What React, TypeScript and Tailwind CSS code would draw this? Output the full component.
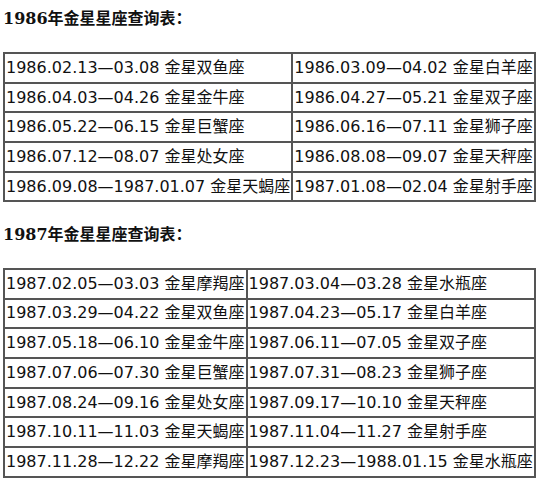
const TABLE_1986: [string, string][] = [
  ['1986.02.13—03.08 金星双鱼座', '1986.03.09—04.02 金星白羊座'],
  ['1986.04.03—04.26 金星金牛座', '1986.04.27—05.21 金星双子座'],
  ['1986.05.22—06.15 金星巨蟹座', '1986.06.16—07.11 金星狮子座'],
  ['1986.07.12—08.07 金星处女座', '1986.08.08—09.07 金星天秤座'],
  ['1986.09.08—1987.01.07 金星天蝎座', '1987.01.08—02.04 金星射手座'],
];

const TABLE_1987: [string, string][] = [
  ['1987.02.05—03.03 金星摩羯座', '1987.03.04—03.28 金星水瓶座'],
  ['1987.03.29—04.22 金星双鱼座', '1987.04.23—05.17 金星白羊座'],
  ['1987.05.18—06.10 金星金牛座', '1987.06.11—07.05 金星双子座'],
  ['1987.07.06—07.30 金星巨蟹座', '1987.07.31—08.23 金星狮子座'],
  ['1987.08.24—09.16 金星处女座', '1987.09.17—10.10 金星天秤座'],
  ['1987.10.11—11.03 金星天蝎座', '1987.11.04—11.27 金星射手座'],
  ['1987.11.28—12.22 金星摩羯座', '1987.12.23—1988.01.15 金星水瓶座'],
];

function Title({ children }: { children: React.ReactNode }) {
  return (
    <div className="flex h-[20px] items-center">
      <p className="font-bold text-[16px] leading-none text-[#111] font-['DejaVu_Serif','Noto_Sans_CJK_SC',serif]">
        {children}
      </p>
    </div>
  );
}

function VenusTable({ rows }: { rows: [string, string][] }) {
  return (
    <table className="border-separate border-spacing-0 border border-[#555]">
      <tbody>
        {rows.map((row, i) => (
          <tr key={i}>
            {row.map((cell, j) => (
              <td key={j} className="border border-[#555] p-[1px]">
                <div className="flex h-[25.7px] items-center whitespace-nowrap text-[16px] leading-none text-[#111] font-['DejaVu_Sans','Noto_Sans_CJK_SC',sans-serif]">
                  {cell}
                </div>
              </td>
            ))}
          </tr>
        ))}
      </tbody>
    </table>
  );
}

export default function App() {
  return (
    <div className="min-h-screen bg-white px-[3px] pt-[9px]">
      <Title>1986年金星星座查询表：</Title>
      <div className="mt-[23px]">
        <VenusTable rows={TABLE_1986} />
      </div>
      <div className="mt-[23px]">
        <Title>1987年金星星座查询表：</Title>
      </div>
      <div className="mt-[22.5px]">
        <VenusTable rows={TABLE_1987} />
      </div>
    </div>
  );
}
